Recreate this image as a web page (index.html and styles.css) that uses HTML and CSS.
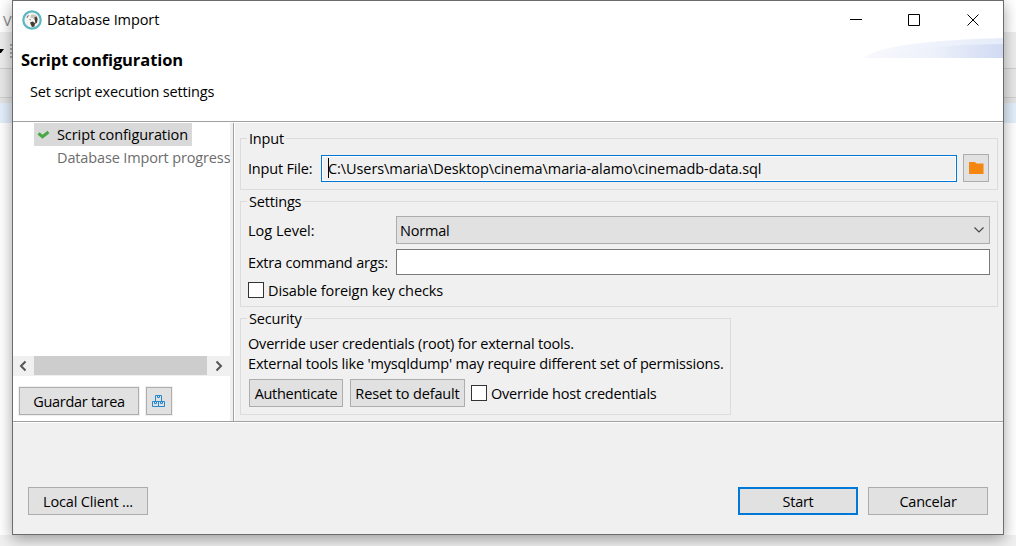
FILE: index.html
```html
<!DOCTYPE html>
<html lang="es">
<head>
<meta charset="utf-8">
<title>Database Import</title>
<link rel="stylesheet" href="styles.css">
</head>
<body>
<div class="desktop">
  <div class="strip strip-menu">Ve</div>
  <div class="strip strip-tools"><svg width="12" height="36"><path d="M0 17h4L1 21H0z" fill="#000"/><path d="M11 12v14" stroke="#aaa" stroke-width="2" stroke-dasharray="2 2"/></svg></div>
  <div class="strip strip-tabs"></div>
  <div class="strip strip-gap"></div>
  <div class="strip strip-select"></div>
  <div class="strip strip-editor"></div>
  <div class="strip strip-status"></div>
</div>
<div class="window">
  <header class="titlebar">
    <svg class="logo" width="20" height="20" viewBox="0 0 20 20">
      <circle cx="10" cy="10" r="8.700" fill="#f7f4f2" stroke="#5bb8c0" stroke-width="2.200"/>
      <path d="M4.500 7q1-2 3-2l-1.500 2-1 1.500z" fill="#857c78"/>
      <path d="M9 4.800q3-1 5.500 1l1.500 2.500-.5 2-3-.5-2-2-2 .5z" fill="#c9c1bd"/>
      <path d="M12.500 7.500l2-1 1 3-.5 3-1.500 1.500-.5-3zM8 12.500l2.500-1 2.500 1.500-.5 3.500-2.500.500-1-2z" fill="#463a36"/>
      <path d="M7.200 9.500l1.300-.5v1.500z" fill="#463a36"/>
    </svg>
    <span class="t-title">Database Import</span>
    <svg class="controls" width="132" height="14" viewBox="0 0 132 14" fill="none" stroke="#000">
      <path d="M1 6.500h12M59.500 1.500h11v11h-11zM118.500 1.500l11 11M129.500 1.500l-11 11"/>
    </svg>
  </header>
  <section class="banner">
    <div class="headings">
      <h1>Script configuration</h1>
      <p>Set script execution settings</p>
    </div>
    <svg class="swoosh" width="140" height="20" viewBox="0 0 140 20">
      <defs><linearGradient id="g"><stop offset="0" stop-color="#f8f9fd"/><stop offset=".5" stop-color="#edf1fa"/><stop offset="1" stop-color="#d0daf3"/></linearGradient>
      <linearGradient id="h"><stop offset="0" stop-color="#f8f9fd"/><stop offset="1" stop-color="#e5ecf9"/></linearGradient></defs>
      <path d="M0 20Q22 3 140 0v20z" fill="url(#h)"/>
      <path d="M0 20Q50 7 140 6v14z" fill="url(#g)"/>
    </svg>
  </section>
  <main class="body">
    <aside class="side">
      <ul class="steps">
        <li class="step current"><svg width="13" height="10" viewBox="0 0 13 10"><path d="M1.500 3.300L5.500 6.700l6-4.700" fill="none" stroke="#4aa845" stroke-width="3"/></svg><span class="t-step">Script configuration</span></li>
        <li class="step pending"><span class="t-progress">Database Import progress</span></li>
      </ul>
      <div class="scrollbar">
        <svg width="21" height="20"><path d="M12.500 5.500L8 10l4.500 4.500" fill="none" stroke="#555" stroke-width="2"/></svg>
        <div class="thumb"></div>
        <svg width="23" height="20"><path d="M9.500 5.500L14 10l-4.500 4.500" fill="none" stroke="#555" stroke-width="2"/></svg>
      </div>
      <div class="task-row">
        <button class="btn wide"><span class="t-guardar">Guardar tarea</span></button>
        <button class="btn icon"><svg width="14" height="13" viewBox="0 0 14 13" fill="none" stroke="#2488d0"><path d="M3.500.500h6v6h-6zM.500 6.500h6v5h-6zM6.500 6.500h6v5h-6z"/><path d="M5.500 1v1.500h2V1M2.500 7v1.500h2V7M8.500 7v1.500h2V7"/></svg></button>
      </div>
    </aside>
    <div class="pages">
      <section class="group g-input">
        <h2>Input</h2>
        <label class="t-file">Input File:</label>
        <div class="field file"><span class="caret"></span><span class="t-path">C:\Users\maria\Desktop\cinema\maria-alamo\cinemadb-data.sql</span></div>
        <button class="btn icon"><svg width="15" height="12" viewBox="0 0 15 12"><path d="M0 0h6l1.500 1.500H14.500V12H0z" fill="#f58610"/></svg></button>
      </section>
      <section class="group g-settings">
        <h2>Settings</h2>
        <label class="t-log">Log Level:</label>
        <div class="combo"><span class="t-normal">Normal</span><svg width="10" height="6"><path d="M.500.500L5 5 9.500.500" fill="none" stroke="#444" stroke-width="1.100"/></svg></div>
        <label class="t-extra">Extra command args:</label>
        <div class="field args"></div>
        <div class="check"><i class="box"></i><span class="t-disable">Disable foreign key checks</span></div>
      </section>
      <section class="group g-security">
        <h2>Security</h2>
        <p>Override user credentials (root) for external tools.</p>
        <p>External tools like 'mysqldump' may require different set of permissions.</p>
        <div class="actions">
          <button class="btn auth"><span>Authenticate</span></button>
          <button class="btn reset"><span class="t-reset">Reset to default</span></button>
          <div class="check"><i class="box"></i><span class="t-host">Override host credentials</span></div>
        </div>
      </section>
    </div>
  </main>
  <footer class="footer">
    <button class="btn wide local"><span class="t-local">Local Client ...</span></button>
    <button class="btn wide start"><span>Start</span></button>
    <button class="btn wide"><span class="t-cancel">Cancelar</span></button>
  </footer>
</div>
</body>
</html>
```

FILE: styles.css
```css
* { box-sizing: border-box; }
body, h1, h2, p, ul { margin: 0; padding: 0; }
body {
  width: 1016px; height: 546px; overflow: hidden; position: relative;
  font: 14.500px/20px "Open Sans", "Noto Sans", sans-serif;
  letter-spacing: -0.180px; color: #000; background: #fff;
}
span, h1, h2, p, label { white-space: nowrap; }
svg { display: block; flex: none; }
.desktop { display: flex; flex-direction: column; height: 546px; }
.strip { flex: none; }
.strip-menu { height: 32px; padding: 11px 0 0 3px; color: #888; }
.strip-tools { height: 36px; background: #ededed; }
.strip-tabs { height: 30px; background: #e8e8e8; border-top: 1px solid #d0d0d0; border-bottom: 1px solid #d0d0d0; }
.strip-gap { height: 5px; background: #e4e4e4; }
.strip-select { height: 20px; background: #e3effb; }
.strip-editor { height: 412px; background: #fff; }
.strip-status { height: 11px; background: #f0f0f0; }
/* The dialog floats over the application window. */
.window {
  position: absolute; left: 12px; top: 0; width: 992px; height: 535px;
  display: grid; grid-template-rows: 37px 84px 300px 1fr;
  border: 1px solid #6c6c6c; background: #f0f0f0;
  box-shadow: 0 4px 14px rgba(0,0,0,.36);
}
.titlebar { display: flex; align-items: center; background: #fff; padding: 0 22px 0 9px; }
.titlebar .logo { margin-right: 5px; }
.t-title { letter-spacing: -0.100px; }
.controls { margin-left: auto; }
.banner { display: flex; justify-content: space-between; background: #fff; border-bottom: 1px solid #a0a0a0; }
.headings { padding: 11px 0 0 8px; }
h1 { font-size: 16.500px; line-height: 22px; font-weight: 700; letter-spacing: -0.090px; }
.headings p { margin: 11px 0 0 9px; letter-spacing: -0.160px; }
.body { display: grid; grid-template-columns: 217px 1fr; border-top: 1px solid #fff; border-bottom: 1px solid #a0a0a0; }
.side { background: #fff; overflow: hidden; display: flex; flex-direction: column; }
.steps { list-style: none; height: 233px; }
.step { margin-left: 21px; height: 23px; display: flex; align-items: center; }
.current { width: 158px; background: #d9d9d9; padding-left: 3px; gap: 7px; }
.t-step { letter-spacing: -0.080px; }
.pending { color: #6d6d6d; padding-left: 23px; }
.t-progress { letter-spacing: -0.140px; }
.scrollbar { display: flex; height: 20px; background: #f0f0f0; }
.thumb { width: 173px; height: 19px; background: #cdcdcd; }
.task-row { display: flex; gap: 7px; padding: 11px 0 0 6px; }
.btn {
  height: 28px; padding: 0; flex: none; display: flex; align-items: center; justify-content: center;
  font: inherit; letter-spacing: -0.300px; color: #000; background: #e1e1e1; border: 1px solid #adadad;
}
.wide { width: 120px; }
.icon { width: 26px; }
.task-row .btn { box-shadow: 0 0 0 1px #f0f0f0; }
.task-row .btn span, .actions .btn span { padding-top: 2px; }
.pages { margin-left: 3px; padding: 15px 5px 0 6px; border-left: 1px solid #a0a0a0; box-shadow: inset 1px 0 #fff; }
.group { position: relative; border: 1px solid #dcdcdc; }
.group h2 { position: absolute; left: 6px; top: -10px; padding: 0 2px; font-size: inherit; font-weight: 400; line-height: 20px; background: #f0f0f0; }
.g-input { height: 52px; display: flex; align-items: center; padding: 8px 7px 0; }
.g-input label { width: 73px; padding-top: 1px; }
.field { height: 27px; background: #fff; border: 1px solid #7a7a7a; }
.file { width: 636px; margin-right: 6px; display: flex; align-items: center; background: #f0f0f0; border-color: #0078d7; padding-left: 6px; box-shadow: inset 0 0 0 1px #fff; }
.caret { width: 1px; height: 20px; background: #000; }
.t-path { letter-spacing: -0.080px; padding-top: 1px; margin-left: -1px; }
.g-settings { height: 106px; margin-top: 11px; padding: 14px 7px 0; display: grid; grid-template-columns: 148px 594px; grid-template-rows: 28px 26px 17px; row-gap: 5px; align-items: center; }
.combo { height: 28px; display: flex; align-items: center; justify-content: space-between; background: #e1e1e1; border: 1px solid #adadad; padding: 0 5px 0 3px; }
.t-log { letter-spacing: 0; padding-top: 1px; }
.t-normal { letter-spacing: -0.200px; padding-top: 1px; }
.t-extra { padding-top: 2px; }
.args { height: 26px; }
.check { display: flex; align-items: center; gap: 4px; }
.g-settings .check { grid-column: 1 / 3; padding-top: 2px; }
.t-disable { letter-spacing: -0.100px; padding-top: 2px; }
.box { width: 16px; height: 16px; background: #fff; border: 1px solid #333; }
.g-security { width: 491px; height: 97px; margin-top: 11px; padding: 15px 7px 0; }
.actions { display: flex; align-items: center; margin: 5px 0 0 1px; }
.auth { width: 94px; margin-right: 7px; }
.reset { width: 115px; margin-right: 6px; }
.t-reset { letter-spacing: -0.130px; }
.t-host { letter-spacing: -0.210px; padding-top: 1px; }
.footer { display: flex; align-items: flex-start; gap: 10px; padding: 64px 15px 0; border-top: 1px solid #fff; }
.footer .btn span { padding-top: 1px; }
.local { margin-right: auto; }
.t-local { letter-spacing: -0.170px; }
.t-cancel { letter-spacing: -0.200px; }
.start { border: 2px solid #0078d7; }
```
